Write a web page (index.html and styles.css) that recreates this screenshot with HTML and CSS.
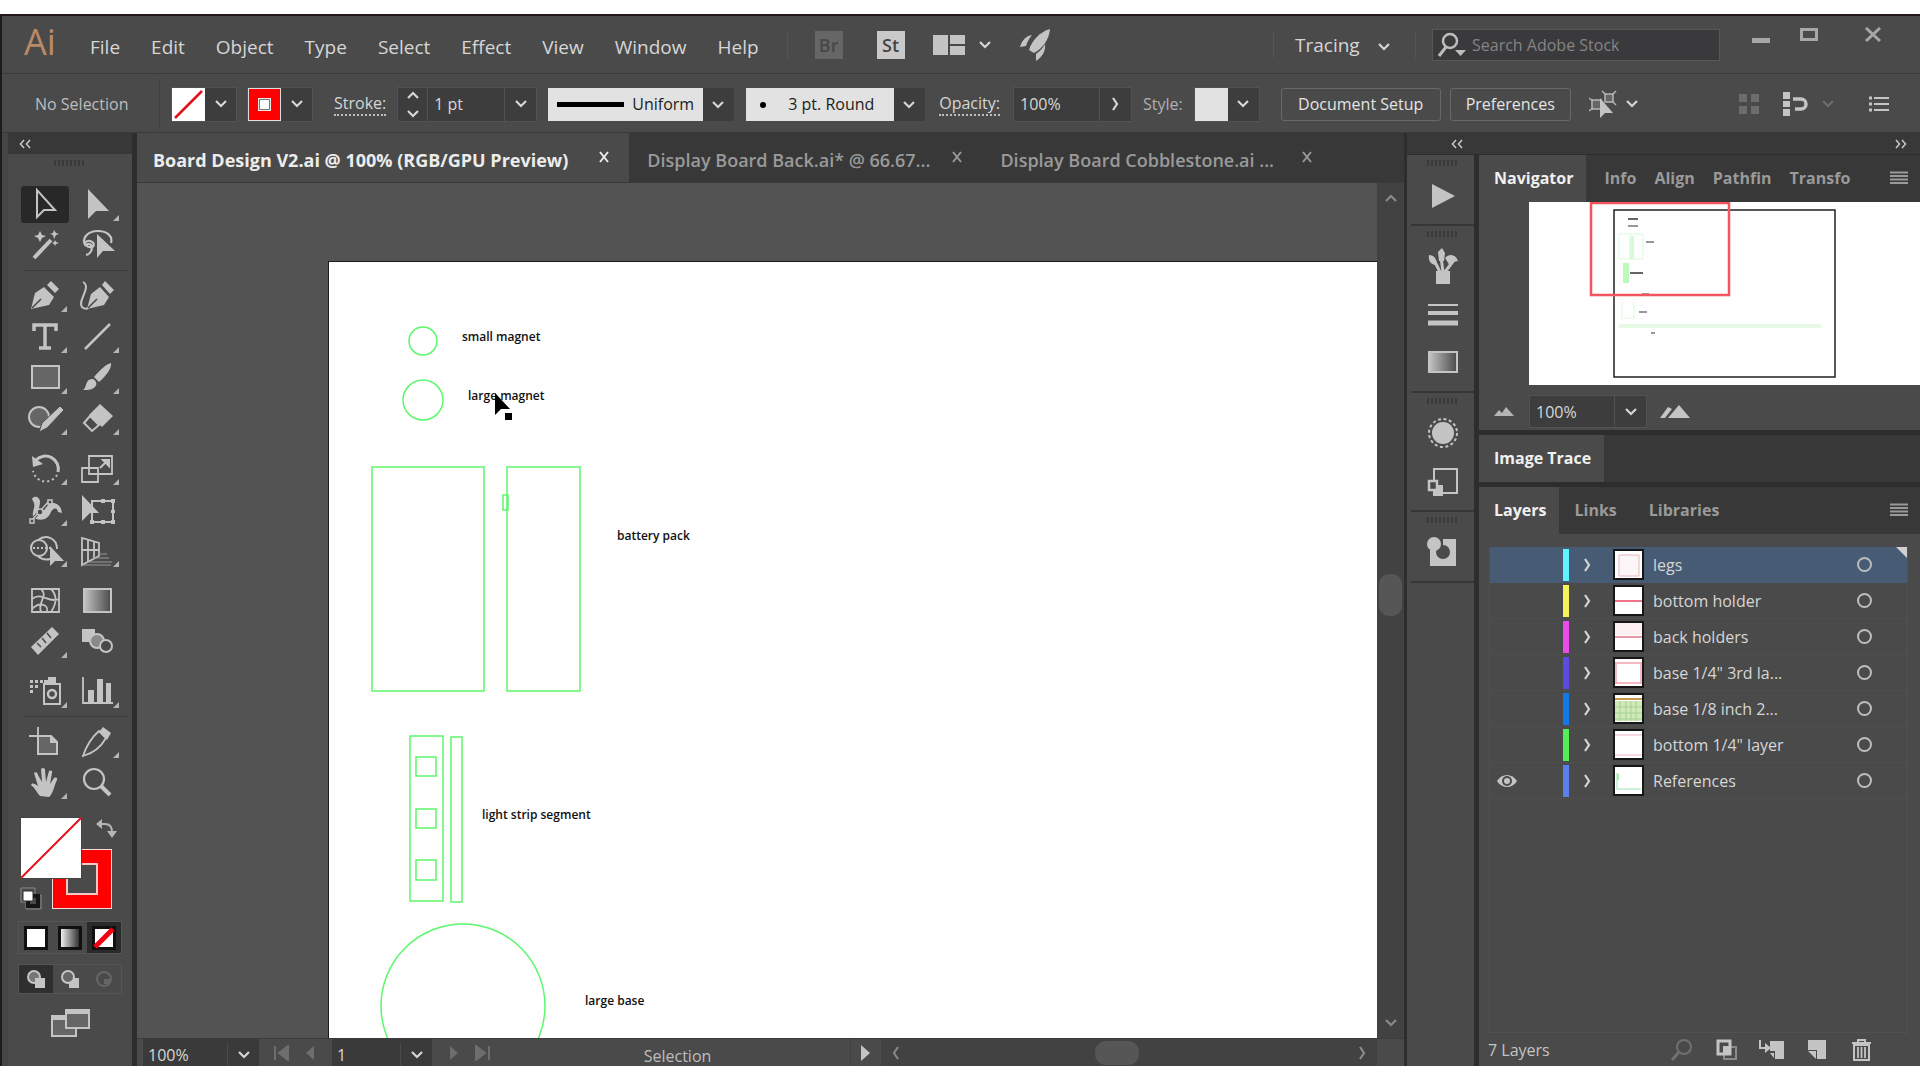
FILE: index.html
```html
<!DOCTYPE html>
<html lang="en">
<head>
<meta charset="utf-8">
<title>Board Design V2.ai</title>
<link rel="stylesheet" href="styles.css">
</head>
<body>
<svg class="defs" aria-hidden="true">
  <defs>
    <symbol id="down" viewBox="0 0 14 14"><path d="M2 4l5 5 5-5" fill="none" stroke="currentColor" stroke-width="2.2"/></symbol>
    <symbol id="up" viewBox="0 0 14 14"><path d="M2 10l5-5 5 5" fill="none" stroke="currentColor" stroke-width="2.2"/></symbol>
    <symbol id="right" viewBox="0 0 14 14"><path d="M5 1l4 6-4 6" fill="none" stroke="currentColor" stroke-width="2.2"/></symbol>
    <symbol id="left" viewBox="0 0 14 14"><path d="M9 1L5 7l4 6" fill="none" stroke="currentColor" stroke-width="2"/></symbol>
    <symbol id="close" viewBox="0 0 14 14"><path d="M3 2l8 10M11 2L3 12" fill="none" stroke="currentColor" stroke-width="2"/></symbol>
    <symbol id="dleft" viewBox="0 0 14 14"><path d="M6 3L2.500 7 6 11M12 3L8.500 7l3.500 4" fill="none" stroke="currentColor" stroke-width="1.600"/></symbol>
    <symbol id="dright" viewBox="0 0 14 14"><path d="M2 3l3.500 4L2 11M8 3l3.500 4L8 11" fill="none" stroke="currentColor" stroke-width="1.600"/></symbol>
    <symbol id="menu" viewBox="0 0 18 14"><path d="M0 1.500h18M0 5h18M0 8.500h18M0 12h18" stroke="currentColor" stroke-width="1.800"/></symbol>
    <symbol id="eye" viewBox="0 0 22 16"><path d="M1 8c5-8 15-8 20 0-5 8-15 8-20 0z" fill="currentColor"/><circle cx="11" cy="8" r="5" fill="#4a4a4a"/><circle cx="11" cy="8" r="3" fill="currentColor"/></symbol>
    <linearGradient id="fade"><stop offset="0" stop-color="#c4c4c4"/><stop offset="1" stop-color="#4a4a4a"/></linearGradient>
    <linearGradient id="mono"><stop offset="0" stop-color="#fff"/><stop offset="1" stop-color="#222"/></linearGradient>
  </defs>
</svg>

<div class="app">
  <header class="menubar">
    <span class="logo">Ai</span>
    <nav class="menus">
      <button>File</button><button>Edit</button><button>Object</button><button>Type</button><button>Select</button><button>Effect</button><button>View</button><button>Window</button><button>Help</button>
    </nav>
    <div class="launchers">
      <button class="badge off">Br</button>
      <button class="badge">St</button>
      <button class="arrange" aria-label="Arrange documents">
        <svg width="32" height="20"><path d="M0 0h15v20H0zM17 0h15v9H17zM17 11h15v9H17z" fill="#c4c4c4"/></svg>
        <svg class="chev"><use href="#down"/></svg>
      </button>
      <button aria-label="GPU performance">
        <svg width="30" height="32" viewBox="0 0 30 32"><path d="M30 0C20 3 12 11 9 21l5 3C23 19 29 11 30 0z" fill="#c4c4c4"/><path d="M12 6C6 7 2 11 0 18l6-1c1-4 3-7 6-11zM25 15c-2 4-5 7-9 10l0 7c6-4 10-10 9-17z" fill="#c4c4c4"/></svg>
      </button>
    </div>
    <div class="workspace-pick">
      <select aria-label="Workspace"><option>Tracing</option></select>
      <svg class="chev"><use href="#down"/></svg>
    </div>
    <label class="search">
      <svg width="30" height="28" viewBox="0 0 30 28"><circle cx="13" cy="10" r="7" fill="none" stroke="#bdbdbd" stroke-width="2.500"/><path d="M9 16l-7 9" stroke="#bdbdbd" stroke-width="3"/><path d="M18 19h11l-5.500 6z" fill="#bdbdbd"/></svg>
      <input type="search" placeholder="Search Adobe Stock" aria-label="Search Adobe Stock">
    </label>
    <div class="window-buttons">
      <button aria-label="Minimize"><svg width="18" height="18"><path d="M0 11h18v5H0z" fill="#a9a6aa"/></svg></button>
      <button aria-label="Maximize"><svg width="18" height="18"><path d="M1.500 2.500h15v10h-15z" fill="none" stroke="#a9a6aa" stroke-width="3"/></svg></button>
      <button aria-label="Close"><svg width="18" height="18"><path d="M2 1l14 13M16 1L2 14" stroke="#a9a6aa" stroke-width="3"/></svg></button>
    </div>
  </header>

  <div class="controlbar">
    <span class="status">No Selection</span>
    <div class="combo">
      <button class="swatch" aria-label="Fill"><svg width="33" height="33"><path d="M0 0h33v33H0z" fill="#fff"/><path d="M3 30L30 3" stroke="#e0101c" stroke-width="2.500"/></svg></button>
      <button class="drop" aria-label="Fill options"><svg class="chev"><use href="#down"/></svg></button>
    </div>
    <div class="combo">
      <button class="swatch" aria-label="Stroke colour"><svg width="33" height="33"><path d="M0 0h33v33H0z" fill="#ddd"/><path d="M1 1h31v31H1z" fill="#fe0000"/><path d="M10 10h13v13H10z" fill="#e8e8e8"/><path d="M11.500 11.500h10v10h-10z" fill="#fff" stroke="#777"/></svg></button>
      <button class="drop" aria-label="Stroke colour options"><svg class="chev"><use href="#down"/></svg></button>
    </div>
    <label class="dotted lead" for="weight">Stroke:</label>
    <div class="combo">
      <span class="spinner">
        <button aria-label="Increase"><svg class="chev"><use href="#up"/></svg></button>
        <button aria-label="Decrease"><svg class="chev"><use href="#down"/></svg></button>
      </span>
      <input id="weight" class="w-weight" value="1 pt">
      <button class="drop" aria-label="Stroke weights"><svg class="chev"><use href="#down"/></svg></button>
    </div>
    <div class="light-combo w-profile">
      <span class="profile-line"></span>
      <select aria-label="Width profile"><option>Uniform</option></select>
      <svg class="chev"><use href="#down"/></svg>
    </div>
    <div class="light-combo w-brush">
      <span class="brush-dot"></span>
      <select aria-label="Brush"><option>3 pt. Round</option></select>
      <svg class="chev"><use href="#down"/></svg>
    </div>
    <label class="dotted" for="opacity">Opacity:</label>
    <div class="combo">
      <input id="opacity" class="w-opacity" value="100%">
      <button class="drop" aria-label="Opacity slider"><svg class="chev"><use href="#right"/></svg></button>
    </div>
    <span class="muted">Style:</span>
    <div class="combo">
      <button class="swatch pale" aria-label="Graphic style"></button>
      <button class="drop" aria-label="Graphic styles"><svg class="chev"><use href="#down"/></svg></button>
    </div>
    <div class="actions">
      <button class="outlined w-setup">Document Setup</button>
      <button class="outlined w-prefs">Preferences</button>
    </div>
    <button class="iconpair" aria-label="Select similar">
      <svg width="28" height="28" viewBox="0 0 28 28"><path d="M3 10h9v9H3zM16 4h8v8h-8z" fill="#666" stroke="#b5b5b5" stroke-width="1.500"/><path d="M0 8l4 3M0 21l4-3M13 1l4 4M27 1l-4 4M27 15l-4-4" stroke="#b5b5b5" stroke-width="1.500"/><path d="M11 8v20l5-5h8z" fill="#c4c4c4"/></svg>
      <svg class="chev"><use href="#down"/></svg>
    </button>
    <div class="bar-end">
      <button aria-label="Align to grid"><svg width="20" height="20"><path d="M0 0h8v8H0zM12 0h8v8h-8zM0 12h8v8H0zM12 12h8v8h-8z" fill="#6c6c6c"/></svg></button>
      <button class="iconpair" aria-label="Snap options">
        <svg width="26" height="26" viewBox="0 0 26 26"><path d="M0 1h7v7H0zM0 10h7v6H0zM0 18h7v7H0z" fill="#c4c4c4"/><path d="M10 8h8a5 5 0 0 1 0 10h-6" fill="none" stroke="#c4c4c4" stroke-width="3.500"/></svg>
        <svg class="chev dim"><use href="#down"/></svg>
      </button>
      <button aria-label="Panel options"><svg width="20" height="16"><path d="M0 2h3M0 8h3M0 14h3" stroke="#c4c4c4" stroke-width="3"/><path d="M5 2h15M5 8h15M5 14h15" stroke="#c4c4c4" stroke-width="2"/></svg></button>
    </div>
  </div>

  <main class="workspace">
    <aside class="toolbox">
      <button class="collapse" aria-label="Collapse tools"><svg class="chev"><use href="#dleft"/></svg></button>
      <span class="grip"></span>
      <div class="tools">
        <div class="toolgroup ruled">
          <button class="active" aria-label="Selection"><svg class="tool"><path d="M16 6v27l7-7h11z" fill="none" stroke="#c4c4c4" stroke-width="2"/></svg></button>
          <button aria-label="Direct selection"><svg class="tool"><path d="M15 5v30l8-8h13z" fill="#c4c4c4"/><path d="M46 31v6h-6z" fill="#b5b5b5"/></svg></button>
          <button aria-label="Magic wand"><svg class="tool"><path d="M13 33l17-18" stroke="#c4c4c4" stroke-width="4"/><path d="M19 6l2 4 4 1-4 2-2 4-2-4-4-2 4-1zM33 5l2 3 3 1-3 1-2 4-1-4-3-1 3-1zM34 15l1 2 3 1-3 1-1 2-1-2-2-1 2-1z" fill="#c4c4c4"/></svg></button>
          <button aria-label="Lasso"><svg class="tool"><path d="M13 21c-5-6 0-15 12-15 9 0 15 5 13 12M13 21c-3-3 1-6 4-5 6 2 4 7-1 6-4-1-2-5 2-2 2 4 0 9-5 10" fill="none" stroke="#c4c4c4" stroke-width="2.200"/><path d="M24 9v24l6-7h12z" fill="#c4c4c4"/></svg></button>
        </div>
        <div class="toolgroup">
          <button aria-label="Pen"><svg class="tool"><path d="M10 34l4-16 9-6 10 10-5 8zM26 10l4-4 8 8-4 4z" fill="#c4c4c4"/><path d="M11 33l9-9" stroke="#4a4a4a" stroke-width="1.600"/><path d="M46 31v6h-6z" fill="#b5b5b5"/></svg></button>
          <button aria-label="Curvature"><svg class="tool"><path d="M14 34l4-15 9-7 9 10-5 8zM29 10l3-4 9 9-4 4z" fill="#c4c4c4"/><path d="M15 33l9-9" stroke="#4a4a4a" stroke-width="1.600"/><path d="M10 7c9 5-6 19-1 25 2 2 5 2 6 1" fill="none" stroke="#c4c4c4" stroke-width="2"/></svg></button>
          <button aria-label="Type"><svg class="tool"><path d="M13 15V9h22v6M24 9v23M18 32h12" fill="none" stroke="#c4c4c4" stroke-width="3.500"/><path d="M46 31v6h-6z" fill="#b5b5b5"/></svg></button>
          <button aria-label="Line"><svg class="tool"><path d="M12 33L37 8" stroke="#c4c4c4" stroke-width="2.500"/><path d="M46 31v6h-6z" fill="#b5b5b5"/></svg></button>
          <button aria-label="Rectangle"><svg class="tool"><path d="M11 9h27v22H11z" fill="#666" stroke="#c4c4c4" stroke-width="2"/><path d="M46 31v6h-6z" fill="#b5b5b5"/></svg></button>
          <button aria-label="Paintbrush"><svg class="tool"><path d="M21 20C26 14 33 7 38 6c1 5-5 13-12 19zM10 33c4-2 2-12 10-11 7 4 3 12-10 11z" fill="#c4c4c4"/><path d="M46 31v6h-6z" fill="#b5b5b5"/></svg></button>
          <button aria-label="Shaper"><svg class="tool"><circle cx="18" cy="19" r="10" fill="#666" stroke="#c4c4c4" stroke-width="2"/><path d="M18 34l3-9L39 8l4 4-17 18z" fill="#c4c4c4" stroke="#4a4a4a"/><path d="M46 31v6h-6z" fill="#b5b5b5"/></svg></button>
          <button aria-label="Eraser"><svg class="tool"><path d="M27 6l13 12-11 11-13-12z" fill="#c4c4c4"/><path d="M17 18l-6 7 8 8 7-6z" fill="none" stroke="#c4c4c4" stroke-width="2"/><path d="M46 31v6h-6z" fill="#b5b5b5"/></svg></button>
        </div>
        <div class="toolgroup">
          <button aria-label="Rotate"><svg class="tool"><path d="M15 12a13 13 0 0 1 22 12" fill="none" stroke="#c4c4c4" stroke-width="3"/><path d="M11 8l1 11 10-3z" fill="#c4c4c4"/><path d="M36 27a13 13 0 0 1-24-4" fill="none" stroke="#c4c4c4" stroke-width="2" stroke-dasharray="2 3"/><path d="M46 31v6h-6z" fill="#b5b5b5"/></svg></button>
          <button aria-label="Scale"><svg class="tool"><path d="M16 8h23v18H16zM9 20h16v14H9z" fill="none" stroke="#c4c4c4" stroke-width="1.800"/><path d="M27 20l5-5M30 12h6v6z" stroke="#c4c4c4" stroke-width="2" fill="#c4c4c4"/><path d="M46 31v6h-6z" fill="#b5b5b5"/></svg></button>
          <button aria-label="Width"><svg class="tool"><path d="M11 10c2-4 8-2 8 3 0 5-3 8 1 9 4 0 5-4 7-6 4-4 13-2 14 8l-4-1c-1-5-5-4-7 0-3 7-8 9-15 7-5-2-3-7-2-11 1-4 0-5-2-9z" fill="#c4c4c4"/><path d="M11 31L28 12" stroke="#4a4a4a" stroke-width="3"/><path d="M11 31L28 12" stroke="#c4c4c4" stroke-width="1.500"/><path d="M9 30h4v4H9zM27 11h4v4h-4z" fill="#4a4a4a" stroke="#c4c4c4" stroke-width="1.500"/><circle cx="19" cy="23" r="3" fill="#4a4a4a" stroke="#c4c4c4" stroke-width="1.500"/><path d="M46 31v6h-6z" fill="#b5b5b5"/></svg></button>
          <button aria-label="Free transform"><svg class="tool"><path d="M19 12h21v21H19z" fill="none" stroke="#c4c4c4" stroke-width="2"/><path d="M38 10h4v4h-4zM38 31h4v4h-4zM17 31h4v4h-4zM38 21h4v3h-4zM28 10h4v4h-4zM28 31h4v4h-4z" fill="#c4c4c4"/><path d="M9 6v26l8-8h9z" fill="#c4c4c4"/></svg></button>
          <button aria-label="Shape builder"><svg class="tool"><circle cx="18" cy="18" r="8" fill="none" stroke="#c4c4c4" stroke-width="2"/><path d="M17 10c8-6 19-2 19 9M17 26c4 4 8 4 12 3" fill="none" stroke="#c4c4c4" stroke-width="2"/><path d="M12 18h18" stroke="#c4c4c4" stroke-width="2" stroke-dasharray="2 2"/><path d="M29 16v20l5-5h9z" fill="#c4c4c4"/><path d="M46 31v6h-6z" fill="#b5b5b5"/></svg></button>
          <button aria-label="Perspective grid"><svg class="tool"><path d="M9 8v27l17-9V13zM9 20h17M15 10v22M21 12v17" fill="none" stroke="#c4c4c4" stroke-width="1.800"/><path d="M25 24h9M20 28h16M15 32h24M10 35h28" stroke="#999" stroke-width="1.200"/><path d="M46 31v6h-6z" fill="#b5b5b5"/></svg></button>
        </div>
        <div class="toolgroup">
          <button aria-label="Mesh"><svg class="tool"><path d="M11 9h27v23H11zM11 19c10-8 16 5 27 0M11 29c8-8 17-4 15 3M20 9c8 7-4 13 0 23M30 9c8 8 4 17 0 23" fill="none" stroke="#c4c4c4" stroke-width="1.800"/></svg></button>
          <button aria-label="Gradient"><svg class="tool"><path d="M11 9h27v23H11z" fill="url(#fade)" stroke="#c4c4c4" stroke-width="2"/></svg></button>
          <button aria-label="Measure"><svg class="tool"><path d="M10 26L31 6l7 7-21 21z" fill="#c4c4c4"/><path d="M16 22l4 4M21 17l4 5M26 12l4 5" stroke="#4a4a4a" stroke-width="1.500"/><path d="M46 31v6h-6z" fill="#b5b5b5"/></svg></button>
          <button aria-label="Blend"><svg class="tool"><path d="M9 8h13v13H9z" fill="#c4c4c4"/><circle cx="24" cy="20" r="7" fill="#8a8a8a" stroke="#c4c4c4" stroke-width="2"/><circle cx="33" cy="25" r="6" fill="#4a4a4a" stroke="#c4c4c4" stroke-width="2"/></svg></button>
        </div>
        <div class="toolgroup ruled">
          <button aria-label="Symbol sprayer"><svg class="tool"><path d="M9 9h3v3H9zM14 9h3v3h-3zM19 9h3v3h-3zM9 14h3v3H9zM14 14h3v3h-3zM9 19h3v3H9zM27 6h8v6h-8zM23 9h4v3h-4z" fill="#c4c4c4"/><path d="M23 13h16v20H23z" fill="none" stroke="#c4c4c4" stroke-width="2"/><circle cx="31" cy="23" r="4" fill="none" stroke="#c4c4c4" stroke-width="2.500"/><path d="M46 31v6h-6z" fill="#b5b5b5"/></svg></button>
          <button aria-label="Column graph"><svg class="tool"><path d="M10 6v26h30" fill="none" stroke="#c4c4c4" stroke-width="1.800"/><path d="M15 19h6v13h-6zM24 8h6v24h-6zM33 12h5v20h-5z" fill="#c4c4c4"/><path d="M46 31v6h-6z" fill="#b5b5b5"/></svg></button>
        </div>
        <div class="toolgroup">
          <button aria-label="Artboard"><svg class="tool"><path d="M17 15h13l6 6v12H17z" fill="#666" stroke="#c4c4c4" stroke-width="2"/><path d="M29 14v8h8z" fill="#c4c4c4"/><path d="M8 15h11M17 6v10" stroke="#c4c4c4" stroke-width="1.800"/></svg></button>
          <button aria-label="Slice"><svg class="tool"><path d="M10 35c4-12 9-19 16-25l7 7c-5 9-12 15-23 18z" fill="none" stroke="#c4c4c4" stroke-width="1.800"/><path d="M26 11l4-5 8 6-4 7z" fill="#c4c4c4"/><path d="M46 31v6h-6z" fill="#b5b5b5"/></svg></button>
          <button aria-label="Hand"><svg class="tool"><path d="M19 34c-3-3-5-8-9-11 1-3 4-1 7 1L13 11c2-2 4 0 4 2l4 7-1-13c2-2 4-1 4 1l1 12 3-11c2-1 4 0 3 2l-2 11 4-6c2-1 4 0 3 2-3 6-4 14-8 17z" fill="#c4c4c4"/><path d="M46 31v6h-6z" fill="#b5b5b5"/></svg></button>
          <button aria-label="Zoom"><svg class="tool"><circle cx="21" cy="17" r="10" fill="none" stroke="#c4c4c4" stroke-width="2.200"/><path d="M28 24l9 9" stroke="#c4c4c4" stroke-width="4"/></svg></button>
        </div>
      </div>
      <svg class="fillstroke" width="112" height="96" viewBox="0 0 112 96">
        <path d="M32 32h60v60H32z" fill="#f7dcdc"/><path d="M33 33h58v58H33z" fill="#fe0000"/><path d="M46 46h32v32H46z" fill="#f3c8c8"/><path d="M48 48h28v28H48z" fill="#4a4a4a"/>
        <path d="M.500.500h61v61H.500z" fill="#fff" stroke="#444"/><path d="M1 61L61 1" stroke="#e0101c" stroke-width="2"/>
        <path d="M80 7h5q7 0 7 8" fill="none" stroke="#b5b5b5" stroke-width="2"/><path d="M76 7l6-5v10zM87 14h10l-5 7z" fill="#b5b5b5"/>
        <path d="M1 71h14v7h6v14H6v-7H1z" fill="none" stroke="#8a8a8a"/><path d="M8 79h10v10H8z" fill="none" stroke="#161616" stroke-width="4"/><path d="M3 74h10v10H3z" fill="#fff" stroke="#333"/>
      </svg>
      <div class="paint-types">
        <button aria-label="Colour"><svg width="24" height="24"><path d="M1.500 1.500h21v21h-21z" fill="#fff" stroke="#111" stroke-width="3"/></svg></button>
        <button aria-label="Gradient fill"><svg width="24" height="24"><path d="M1.500 1.500h21v21h-21z" fill="url(#mono)" stroke="#111" stroke-width="3"/></svg></button>
        <button class="active" aria-label="None"><svg width="24" height="24"><path d="M1.500 1.500h21v21h-21z" fill="#fff" stroke="#111" stroke-width="3"/><path d="M3 21L21 3" stroke="#f00012" stroke-width="5"/></svg></button>
      </div>
      <div class="draw-modes">
        <button class="active" aria-label="Draw normal"><svg width="20" height="20"><circle cx="8" cy="8" r="6" fill="#777" stroke="#c4c4c4" stroke-width="2"/><path d="M9 9h10v10H9z" fill="#c4c4c4"/></svg></button>
        <button aria-label="Draw behind"><svg width="20" height="20"><path d="M9 9h10v10H9z" fill="#c4c4c4"/><circle cx="8" cy="8" r="6" fill="#666" stroke="#c4c4c4" stroke-width="2"/></svg></button>
        <button aria-label="Draw inside"><svg width="20" height="20"><circle cx="10" cy="10" r="7" fill="none" stroke="#666" stroke-width="2"/><path d="M10 10h6v5h-6z" fill="#666"/></svg></button>
      </div>
      <button class="screen-mode" aria-label="Screen mode"><svg width="40" height="30"><path d="M1 8h24v20H1z" fill="#666" stroke="#c4c4c4" stroke-width="2"/><path d="M1 8h24v4H1z" fill="#c4c4c4"/><path d="M15 2h23v18H15z" fill="#666" stroke="#c4c4c4" stroke-width="2"/><path d="M15 2h23v4H15z" fill="#c4c4c4"/></svg></button>
    </aside>

    <section class="document">
      <div class="doc-tabs">
        <div class="doc-tab current"><button>Board Design V2.ai @ 100% (RGB/GPU Preview)</button><button aria-label="Close tab"><svg class="chev"><use href="#close"/></svg></button></div>
        <div class="doc-tab"><button>Display Board Back.ai* @ 66.67...</button><button aria-label="Close tab"><svg class="chev"><use href="#close"/></svg></button></div>
        <div class="doc-tab"><button>Display Board Cobblestone.ai ...</button><button aria-label="Close tab"><svg class="chev"><use href="#close"/></svg></button></div>
      </div>
      <div class="canvas-row">
        <svg class="canvas">
          <rect x="191" y="78" width="100%" height="100%" fill="#1c1c1c"/>
          <rect x="192" y="79" width="100%" height="100%" fill="#fefefe"/>
          <g class="outline">
            <circle cx="286" cy="158" r="14"/>
            <circle cx="286" cy="217" r="20"/>
            <path d="M235 284h112v224H235zM370 284h73v224h-73zM366 312h5v15h-5z"/>
            <path d="M273 553h33v165h-33zM279 574h20v19h-20zM279 626h20v19h-20zM279 677h20v20h-20zM314 554h11v165h-11z"/>
            <circle cx="326" cy="823" r="82"/>
          </g>
          <g class="labels">
            <text x="325" y="158">small magnet</text>
            <text x="331" y="217">large magnet</text>
            <text x="480" y="357">battery pack</text>
            <text x="345" y="636">light strip segment</text>
            <text x="448" y="822">large base</text>
          </g>
          <path d="M358 210v22l6-6h9zM368 230h7v7h-7z" fill="#000"/>
        </svg>
        <div class="vscroll">
          <svg class="chev"><use href="#up"/></svg>
          <span class="thumb"></span>
          <svg class="chev"><use href="#down"/></svg>
        </div>
      </div>
      <div class="statusbar">
        <div class="status-field"><input class="w-zoom" aria-label="Zoom level" value="100%"><button class="drop" aria-label="Zoom levels"><svg class="chev"><use href="#down"/></svg></button></div>
        <div class="pager">
          <button aria-label="First artboard"><svg width="16" height="16"><path d="M2 1v14M15 1L6 8l9 7z" stroke="#6e6e6e" stroke-width="2" fill="#6e6e6e"/></svg></button>
          <button aria-label="Previous artboard"><svg width="16" height="16"><path d="M12 1L4 8l8 7z" fill="#6e6e6e"/></svg></button>
        </div>
        <div class="status-field"><input class="w-page" aria-label="Artboard" value="1"><button class="drop" aria-label="Artboards"><svg class="chev"><use href="#down"/></svg></button></div>
        <div class="pager">
          <button aria-label="Next artboard"><svg width="16" height="16"><path d="M4 1l8 7-8 7z" fill="#6e6e6e"/></svg></button>
          <button aria-label="Last artboard"><svg width="16" height="16"><path d="M14 1v14M1 1l9 7-9 7z" stroke="#6e6e6e" stroke-width="2" fill="#6e6e6e"/></svg></button>
        </div>
        <span class="current-tool">Selection</span>
        <button class="play" aria-label="Status options"><svg width="12" height="16"><path d="M1 0l9 8-9 8z" fill="#c4c4c4"/></svg></button>
        <div class="hscroll">
          <svg class="chev"><use href="#left"/></svg>
          <span class="thumb"></span>
          <svg class="chev"><use href="#right"/></svg>
        </div>
        <span class="corner"></span>
      </div>
    </section>

    <aside class="side">
      <div class="side-head">
        <button aria-label="Expand dock"><svg class="chev"><use href="#dleft"/></svg></button>
        <button aria-label="Collapse panels"><svg class="chev"><use href="#dright"/></svg></button>
      </div>
      <div class="side-body">
        <div class="dock">
          <div class="dock-group"><span class="grip"></span>
            <button aria-label="Actions"><svg class="dicon"><path d="M7 6v24l23-12z" fill="#c4c4c4"/></svg></button>
          </div>
          <div class="dock-group"><span class="grip"></span>
            <button aria-label="Brushes"><svg class="dicon"><path d="M11 22h14v13H11z" fill="#c4c4c4"/><path d="M15 23L9 11M18 23L16 8M20 23l9-12" stroke="#c4c4c4" stroke-width="3"/><path d="M4 6c5 0 8 4 8 10-6 0-9-4-8-10zM13 3l4-4 3 5-1 8h-5zM20 9c4-5 11-4 13 3l-5 1-3 4z" fill="#c4c4c4"/></svg></button>
            <button aria-label="Stroke"><svg class="dicon"><path d="M3 8h30" stroke="#c4c4c4" stroke-width="2"/><path d="M3 16h30" stroke="#c4c4c4" stroke-width="4"/><path d="M3 26h30" stroke="#c4c4c4" stroke-width="5"/></svg></button>
            <button aria-label="Gradient panel"><svg class="dicon"><path d="M4 7h28v20H4z" fill="url(#fade)" stroke="#c4c4c4" stroke-width="2"/></svg></button>
          </div>
          <div class="dock-group"><span class="grip"></span>
            <button aria-label="Appearance"><svg class="dicon"><circle cx="18" cy="17" r="11" fill="#c4c4c4"/><circle cx="18" cy="17" r="14" fill="none" stroke="#c4c4c4" stroke-width="2" stroke-dasharray="3 2.500"/></svg></button>
            <button aria-label="Graphic styles panel"><svg class="dicon"><path d="M9 5h23v24H9z" fill="none" stroke="#c4c4c4" stroke-width="2"/><path d="M8 21h10v11H8z" fill="#c4c4c4"/><path d="M4 17h8v9H4z" fill="#4a4a4a" stroke="#c4c4c4" stroke-width="2.500"/></svg></button>
          </div>
          <div class="dock-group"><span class="grip"></span>
            <button aria-label="Asset export"><svg class="dicon"><path d="M5 4h26v27H5z" fill="#c4c4c4"/><circle cx="18" cy="17" r="7" fill="#4a4a4a"/><path d="M3 2h15v13H3z" fill="#4a4a4a"/><circle cx="9" cy="9" r="7" fill="#c4c4c4"/></svg></button>
          </div>
        </div>
        <div class="panels">
          <section class="panel">
            <div class="panel-tabs">
              <button class="current">Navigator</button>
              <div class="tab-rest nav-rest"><button>Info</button><button>Align</button><button>Pathfin</button><button>Transfo</button></div>
              <button class="panel-menu" aria-label="Navigator menu"><svg width="18" height="14"><use href="#menu"/></svg></button>
            </div>
            <svg class="overview">
              <rect width="100%" height="183" fill="#fefefe"/>
              <path d="M85 8h221v167H85z" fill="none" stroke="#222" stroke-width="1.500"/>
              <path d="M90 32h24v25H90zM101 32v25M93 100v16h12v-16" fill="none" stroke="#def9de"/><path d="M101 34h4v23h-4z" fill="#d8fad8"/><path d="M94 61h6v20h-6z" fill="#bdf8bd"/><path d="M90 122h202v4H90z" fill="#e6f9e4"/>
              <path d="M99 17h10M101 71h13" stroke="#333" stroke-width="1.500"/><path d="M99 24h10M117 40h8M113 92h7M110 110h8M122 131h4" stroke="#777" stroke-width="1.500"/>
              <path d="M62 1h138v92H62z" fill="none" stroke="#f4555c" stroke-width="2.500"/>
            </svg>
            <div class="nav-zoom">
              <button aria-label="Zoom out"><svg width="20" height="10"><path d="M0 9l5-6 3 3 4-6 8 9z" fill="#b5b5b5"/></svg></button>
              <div class="combo"><input class="w-nav" aria-label="Navigator zoom" value="100%"><button class="drop" aria-label="Navigator zoom levels"><svg class="chev"><use href="#down"/></svg></button></div>
              <button aria-label="Zoom in"><svg width="30" height="14"><path d="M0 13L8 2l4 2-7 9zM8 13L19 0l11 13z" fill="#c4c4c4"/></svg></button>
            </div>
          </section>
          <section class="panel">
            <div class="panel-tabs"><button class="current">Image Trace</button></div>
          </section>
          <section class="panel layers">
            <div class="panel-tabs">
              <button class="current">Layers</button>
              <div class="tab-rest"><button>Links</button><button>Libraries</button></div>
              <button class="panel-menu" aria-label="Layers menu"><svg width="18" height="14"><use href="#menu"/></svg></button>
            </div>
            <ul class="layer-list">
              <li class="selected"><span class="vis"></span><span class="mark cyan"></span><button aria-label="Expand"><svg class="chev"><use href="#right"/></svg></button><svg class="thumbnail"><path d="M4 4h20v21H4z" fill="#fdf6f8" stroke="#eab6bf"/></svg><span class="name">legs</span><span class="target"></span></li>
              <li><span class="vis"></span><span class="mark yellow"></span><button aria-label="Expand"><svg class="chev"><use href="#right"/></svg></button><svg class="thumbnail"><path d="M0 14h27" stroke="#f2728a" stroke-width="2"/></svg><span class="name">bottom holder</span><span class="target"></span></li>
              <li><span class="vis"></span><span class="mark magenta"></span><button aria-label="Expand"><svg class="chev"><use href="#right"/></svg></button><svg class="thumbnail"><path d="M0 0h27v12H0z" fill="#fdf0f3"/><path d="M0 14h27" stroke="#e59aa8" stroke-width="2"/></svg><span class="name">back holders</span><span class="target"></span></li>
              <li><span class="vis"></span><span class="mark violet"></span><button aria-label="Expand"><svg class="chev"><use href="#right"/></svg></button><svg class="thumbnail"><path d="M0 4h27M0 24h27M1 4v20M26 4v20" stroke="#f2a2b0" stroke-width="1.500"/></svg><span class="name">base 1/4" 3rd la...</span><span class="target"></span></li>
              <li><span class="vis"></span><span class="mark blue"></span><button aria-label="Expand"><svg class="chev"><use href="#right"/></svg></button><svg class="thumbnail"><path d="M0 6h27v20H0z" fill="#cfeab8"/><path d="M0 4h27" stroke="#c99a4a" stroke-width="2"/><path d="M5 6v20M11 6v20M16 6v20M21 6v20M0 12h27M0 18h27M0 24h27" stroke="#a9cf93"/></svg><span class="name">base 1/8 inch 2...</span><span class="target"></span></li>
              <li><span class="vis"></span><span class="mark green"></span><button aria-label="Expand"><svg class="chev"><use href="#right"/></svg></button><svg class="thumbnail"><path d="M0 4h27M0 24h27" stroke="#efb5c0"/></svg><span class="name">bottom 1/4" layer</span><span class="target"></span></li>
              <li><span class="vis"><svg width="22" height="16"><use href="#eye"/></svg></span><span class="mark indigo"></span><button aria-label="Expand"><svg class="chev"><use href="#right"/></svg></button><svg class="thumbnail"><path d="M2 6v16h24" fill="none" stroke="#bfeecb" stroke-width="1.500"/><path d="M2 7h2v6H2z" fill="#a5ebb2"/></svg><span class="name">References</span><span class="target"></span></li>
            </ul>
            <div class="layer-foot">
              <span>7 Layers</span>
              <div class="foot-icons">
                <button aria-label="Locate object"><svg class="ficon"><circle cx="15" cy="9" r="7" fill="none" stroke="#707070" stroke-width="2"/><path d="M10 14l-7 8" stroke="#707070" stroke-width="3"/></svg></button>
                <button aria-label="Make clipping mask"><svg class="ficon"><path d="M10 9h12v12H10z" fill="none" stroke="#8a8a8a" stroke-width="2"/><path d="M4 3h12v13H4z" fill="none" stroke="#c4c4c4" stroke-width="3"/><path d="M9 8h8v8H9z" fill="#c4c4c4"/></svg></button>
                <button aria-label="Create sublayer"><svg class="ficon"><path d="M11 3h14v18h-9v-8h-5z" fill="#c4c4c4"/><path d="M1 2v8h8" fill="none" stroke="#c4c4c4" stroke-width="2"/><path d="M6 5l6 5-6 5zM11 15h4v5z" fill="#c4c4c4"/></svg></button>
                <button aria-label="New layer"><svg class="ficon"><path d="M4 2h18v19h-9v-9H4z" fill="#c4c4c4"/><path d="M4 13h8v8z" fill="#c4c4c4"/></svg></button>
                <button aria-label="Delete layer"><svg class="ficon"><path d="M3 5h19M9 4V2h7v2" fill="none" stroke="#c4c4c4" stroke-width="2"/><path d="M5 7h15v15H5z" fill="none" stroke="#c4c4c4" stroke-width="2"/><path d="M9 9v11M12.500 9v11M16 9v11" stroke="#c4c4c4" stroke-width="1.800"/></svg></button>
              </div>
            </div>
          </section>
        </div>
      </div>
    </aside>
  </main>
</div>
</body>
</html>
```

FILE: styles.css
```css
* { box-sizing: border-box; }

body {
  margin: 0;
  padding: 14px 0;
  height: 100vh;
  min-height: 900px;
  display: flex;
  background: #fff;
  color: #d6d6d6;
  font: 16px/24px "Open Sans", "Noto Sans", sans-serif;
}

button, input, select {
  margin: 0;
  padding: 0;
  border: 0;
  background: none;
  color: inherit;
  font: inherit;
  appearance: none;
  min-width: 0;
}

button { display: flex; align-items: center; justify-content: center; white-space: nowrap; }
svg { display: block; flex: none; }

.defs { position: absolute; width: 0; height: 0; }
.chev { width: 14px; height: 14px; }
.dim { color: #6c6c6c; }

.app {
  flex: 1;
  min-width: 0;
  display: flex;
  flex-direction: column;
  background: #4a4a4a;
  border-left: 2px solid #1c1c1c;
  overflow: hidden;
}

/* Menu bar */
.menubar {
  flex: none;
  height: 60px;
  padding-left: 22px;
  display: flex;
  align-items: center;
  border-top: 2px solid #24171b;
  border-bottom: 1px solid #3c3c3c;
  font-size: 19px;
}
.logo { width: 66px; color: #b98a66; font-size: 36px; line-height: 48px; padding-bottom: 6px; }
.menus { display: flex; gap: 31px; padding: 4px 28px 0 0; border-right: 1px solid #555; }
.launchers { display: flex; align-items: center; gap: 28px; padding-left: 27px; }
.launchers > button:nth-child(2) { margin-left: 6px; }
.arrange { gap: 13px; }
.badge { width: 28px; height: 28px; background: #c9c9c9; color: #444; font-size: 18px; font-weight: 600; }
.badge.off { background: #666; color: #484848; }
.workspace-pick {
  position: relative;
  margin-left: auto;
  width: 143px;
  border-left: 1px solid #555;
  border-right: 1px solid #555;
}
.workspace-pick select { width: 100%; padding-left: 21px; line-height: 26px; }
.workspace-pick .chev { position: absolute; right: 24px; top: 8px; pointer-events: none; }
.search {
  width: 288px;
  height: 32px;
  margin-left: 16px;
  padding-left: 4px;
  display: flex;
  align-items: center;
  gap: 5px;
  background: #3a393b;
  border: 1px solid #565656;
}
.search input { flex: 1; font-size: 16px; }
.search input::placeholder { color: #858585; opacity: 1; }
.window-buttons { display: flex; gap: 30px; padding: 0 38px 18px 32px; }
.window-buttons > :last-child { margin-left: 16px; }

/* Control bar */
.controlbar {
  flex: none;
  height: 59px;
  padding: 2px 31px 0 33px;
  display: flex;
  align-items: center;
  gap: 12px;
  border-bottom: 1px solid #3a3a3a;
  white-space: nowrap;
}
.status { width: 125px; line-height: 50px; border-right: 1px solid #414141; color: #bdbdbd; }
.combo { display: flex; height: 33px; background: #3d3d3d; outline: 1px solid #525252; }
.combo input { padding-left: 6px; border-right: 1px solid #525252; }
.drop { width: 31px; height: 100%; flex: none; }
.swatch { width: 33px; }
.swatch.pale { background: #e2e2e2; }
.spinner { width: 30px; display: flex; flex-direction: column; justify-content: space-between; border-right: 1px solid #525252; }
.dotted { line-height: 22px; border-bottom: 2px dotted #bdbdbd; }
.lead { margin-left: 10px; }
.dotted[for="opacity"] { margin: 0 2px; }
.muted { color: #b0b0b0; }
.w-weight { width: 77px; }
.w-opacity { width: 86px; }
.light-combo { position: relative; height: 33px; }
.light-combo select {
  width: 100%;
  height: 100%;
  color: #1d1d1d;
  background: linear-gradient(to left, #3d3d3d 31px, #e2e2e2 31px);
}
.light-combo .chev { position: absolute; right: 9px; top: 10px; pointer-events: none; }
.w-profile { width: 186px; }
.w-profile select { padding-left: 84px; }
.w-brush { width: 179px; }
.w-brush select { padding-left: 42px; }
.profile-line { position: absolute; left: 9px; top: 14px; width: 67px; height: 5px; background: #000; }
.brush-dot { position: absolute; left: 14px; top: 14px; width: 6px; height: 6px; border-radius: 50%; background: #000; }
.actions { display: flex; gap: 9px; margin-left: 10px; }
.outlined { height: 33px; border: 1px solid #686868; border-radius: 3px; color: #e4e4e4; }
.w-setup { width: 160px; }
.w-prefs { width: 121px; }
.iconpair { gap: 8px; }
.actions + .iconpair { margin-left: 6px; }
.bar-end { margin-left: auto; display: flex; align-items: center; gap: 24px; }
.bar-end > :last-child { margin-left: 10px; }
.bar-end .iconpair { gap: 12px; }

/* Workspace */
.workspace { flex: 1; min-height: 0; display: flex; }

.toolbox {
  flex: none;
  width: 135px;
  border-left: 6px solid #454545;
  border-right: 5px solid #2d2d2d;
  display: flex;
  flex-direction: column;
}
.collapse { height: 21px; padding-left: 10px; justify-content: flex-start; background: #383838; color: #c4c4c4; }
.grip {
  width: 32px;
  height: 6px;
  margin: 6px auto 0;
  background: repeating-linear-gradient(to right, #3a3a3a 0 2px, transparent 2px 4px);
}
.toolbox > .grip { margin-bottom: 18px; }
.tools { padding-left: 11px; display: flex; flex-direction: column; gap: 9px; }
.toolgroup { position: relative; display: grid; grid-template-columns: 52px 52px; grid-auto-rows: 41px; }
.ruled::after { content: ""; position: absolute; left: 4px; right: 4px; bottom: -5px; height: 1px; background: #3c3c3c; }
.tool { width: 48px; height: 41px; }
.toolgroup .active { background: #282828; border-radius: 3px; height: 37px; width: 48px; margin: 2px; }
.fillstroke { margin: 14px 0 0 12px; }
.paint-types, .draw-modes { display: grid; grid-template-columns: repeat(3, 34px); margin-left: 10px; border: 1px solid #555; width: 104px; }
.paint-types { margin-top: 8px; height: 33px; }
.draw-modes { margin-top: 10px; height: 30px; }
.paint-types .active { background: #2a2a2a; }
.draw-modes .active { background: #2f2f2f; }
.screen-mode { margin: 14px 14px 0 16px; }

.document { flex: 1; min-width: 0; display: flex; flex-direction: column; }
.doc-tabs { height: 50px; flex: none; display: flex; background: #383838; border-bottom: 1px solid #3a3a3a; overflow: hidden; }
.doc-tab { display: flex; align-items: center; gap: 20px; padding: 4px 0 0 18px; color: #9a9a9a; font-weight: 600; font-size: 18px; }
.doc-tab .chev { margin-bottom: 6px; }
.doc-tab.current { gap: 29px; padding: 4px 18px 0 16px; background: #4a4a4a; color: #ececec; font-weight: 700; }
.doc-tab + .doc-tab + .doc-tab { padding-left: 36px; gap: 26px; }
.canvas-row { flex: 1; min-height: 0; display: flex; background: #535353; }
.canvas { flex: 1; min-width: 0; height: 100%; overflow: hidden; }
.outline { fill: none; stroke: #5cf76c; stroke-width: 1.500px; }
.labels { font-size: 12px; font-weight: 600; fill: #111; }
.vscroll { width: 27px; display: flex; flex-direction: column; align-items: center; justify-content: space-between; padding: 8px 0; background: #424242; color: #8a8a8a; }
.vscroll .thumb { width: 23px; height: 42px; margin-bottom: 32px; border-radius: 10px; background: #565656; }
.statusbar { flex: none; height: 28px; padding-left: 6px; display: flex; background: #4a4a4a; border-top: 1px solid #3c3c3c; }
.status-field { display: flex; background: #3a3a3a; padding-top: 5px; }
.status-field input { padding-left: 5px; border-right: 1px solid #4a4a4a; }
.w-zoom { width: 85px; }
.w-page { width: 69px; }
.pager { display: flex; width: 73px; justify-content: space-evenly; }
.current-tool { flex: none; width: 346px; padding-top: 5px; text-align: center; border-right: 1px solid #414141; color: #bdbdbd; }
.play { width: 30px; }
.hscroll { flex: 1; display: flex; align-items: center; justify-content: space-between; padding: 0 8px; background: #424242; color: #8a8a8a; }
.hscroll .thumb { width: 44px; height: 24px; margin-right: 24px; border-radius: 11px; background: #565656; }
.corner { width: 27px; background: #4a4a4a; }

/* Right side */
.side { flex: none; width: 516px; border-left: 3px solid #2d2d2d; display: flex; flex-direction: column; }
.side-head { flex: none; height: 22px; padding: 0 12px 0 43px; display: flex; justify-content: space-between; background: #383838; border-bottom: 1px solid #2d2d2d; color: #c4c4c4; }
.side-body { flex: 1; min-height: 0; display: flex; }
.dock { width: 72px; flex: none; padding-left: 4px; border-right: 5px solid #2d2d2d; }
.dock-group { padding-bottom: 10px; display: flex; flex-direction: column; align-items: center; border-bottom: 2px solid #363636; gap: 12px; }
.dock-group .grip { margin: 5px 0 0; }
.dicon { width: 36px; height: 36px; overflow: visible; }
.panels { flex: 1; min-width: 0; display: flex; flex-direction: column; gap: 5px; background: #2d2d2d; }
.panel { background: #4a4a4a; }
.panel-tabs { height: 47px; display: flex; align-items: center; background: #383838; font-weight: 700; color: #9a9a9a; }
.panel-tabs button { padding-bottom: 2px; }
.panel-tabs > .current { height: 100%; padding: 0 13px 2px 15px; background: #4a4a4a; color: #f0f0f0; }
.tab-rest { display: flex; gap: 32px; padding-left: 15px; }
.nav-rest { gap: 18px; padding-left: 18px; }
.panel-menu { margin-left: auto; padding-right: 12px; }
.overview { width: calc(100% - 50px); height: 183px; margin-left: 50px; }
.nav-zoom { height: 45px; padding: 8px 0 0 15px; display: flex; align-items: center; }
.nav-zoom .combo { margin: 0 14px 0 16px; height: 31px; }
.w-nav { width: 85px; }
.layers { flex: 1; min-height: 0; display: flex; flex-direction: column; }
.layer-list { flex: 1; min-height: 0; margin: 13px 12px 0 10px; padding: 0; list-style: none; border: 1px solid #515151; border-top: 0; }
.layer-list li { position: relative; height: 36px; display: flex; align-items: center; border-bottom: 1px solid #4e4e4e; }
.layer-list .selected { background: #485b74; border-bottom-color: #485b74; }
.selected::after { content: ""; position: absolute; right: 0; top: 0; border-top: 11px solid #d0d0d0; border-left: 11px solid transparent; }
.vis { width: 73px; padding-left: 6px; color: #c4c4c4; }
.mark { width: 6px; height: 32px; }
.cyan { background: #5ff3fb; }
.yellow { background: #f5f25a; }
.magenta { background: #e94de9; }
.violet { background: #5c4be0; }
.blue { background: #1479e6; }
.green { background: #55ec5a; }
.indigo { background: #5a7fee; }
.layer-list button { width: 36px; margin-right: 8px; }
.thumbnail { width: 31px; height: 31px; border: 2px solid #161616; background: #fff; }
.name { margin-left: 9px; flex: 1; }
.target { width: 15px; height: 15px; margin-right: 35px; border: 2px solid #bdbdbd; border-radius: 50%; }
.layer-foot { height: 33px; padding: 0 46px 0 9px; display: flex; align-items: center; justify-content: space-between; color: #c4c4c4; }
.foot-icons { display: flex; gap: 20px; }
.ficon { width: 25px; height: 24px; }
```
